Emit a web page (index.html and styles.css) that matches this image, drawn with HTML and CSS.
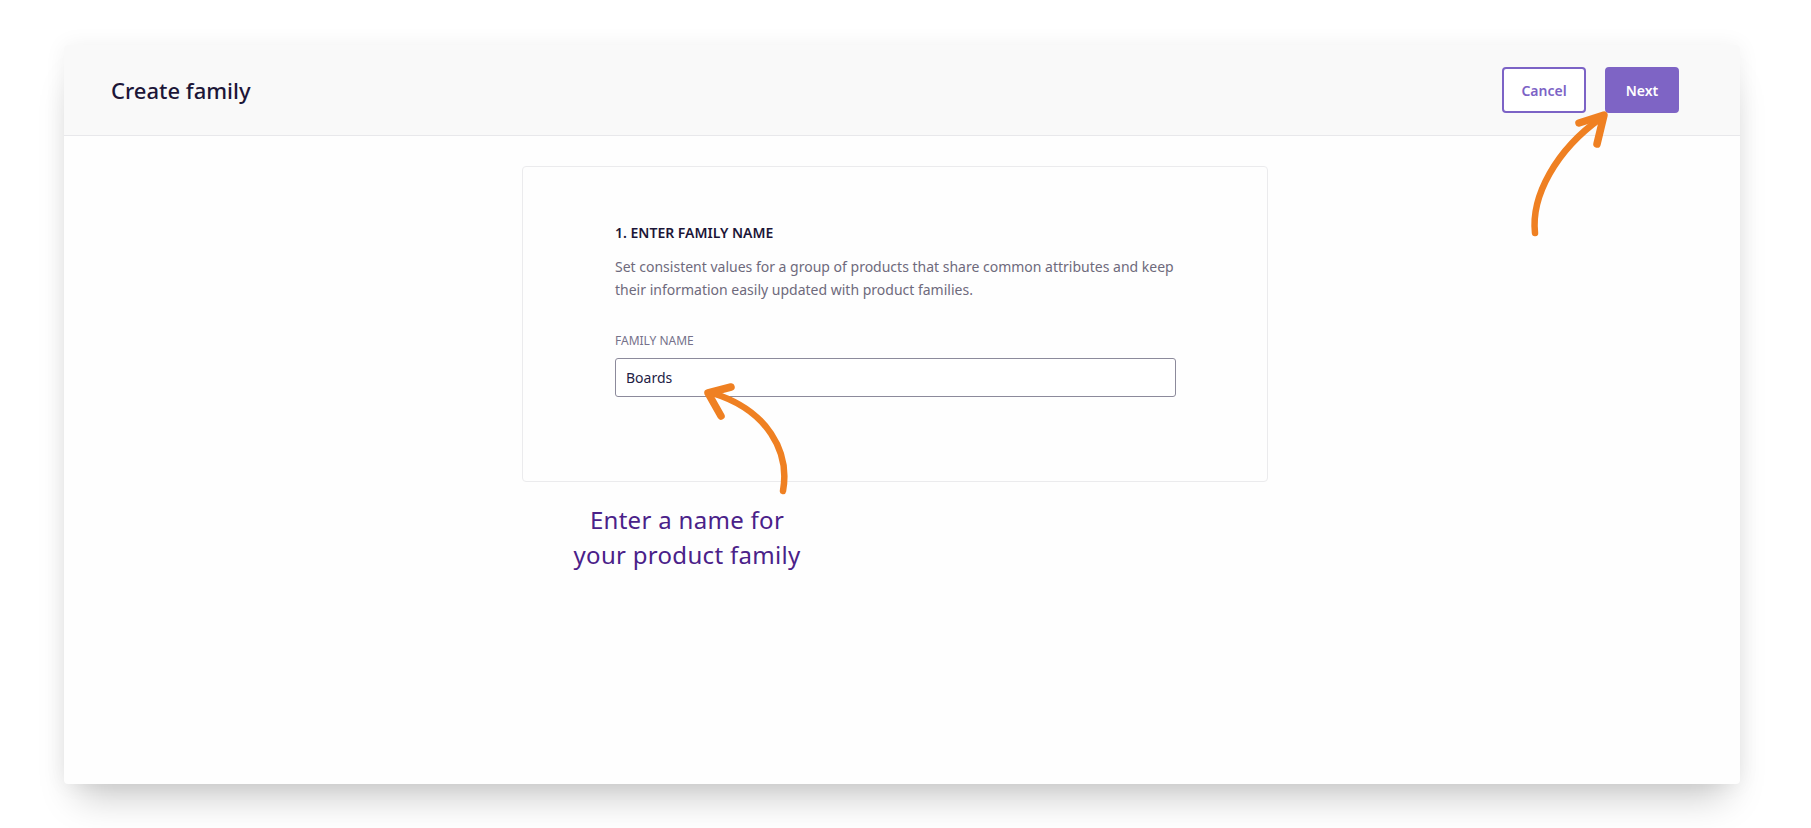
FILE: index.html
```html
<!DOCTYPE html>
<html lang="en">
<head>
<meta charset="utf-8">
<title>Create family</title>
<link rel="stylesheet" href="styles.css">
</head>
<body>
<div class="frame">
  <header class="header">
    <h1 class="title">Create family</h1>
    <div class="actions">
      <button class="btn btn-outline" type="button">Cancel</button>
      <button class="btn btn-primary" type="button">Next</button>
    </div>
  </header>
  <main class="content">
    <section class="card">
      <h2 class="step">1. ENTER FAMILY NAME</h2>
      <p class="desc">Set consistent values for a group of products that share common attributes and keep their information easily updated with product families.</p>
      <label class="label" for="fname">FAMILY NAME</label>
      <input class="field" id="fname" type="text" value="Boards" readonly>
    </section>
  </main>
</div>
<div class="note">Enter a name for<br>your product family</div>
<svg class="arrows" width="1811" height="828" viewBox="0 0 1811 828" aria-hidden="true">
  <g fill="none" stroke="#ef8022" stroke-linecap="round" stroke-linejoin="round">
    <path d="M1535 233 C1531 196 1556 150 1601 118" stroke-width="6.5"/>
    <path d="M1579 123 L1604 115 L1597 144" stroke-width="7.5"/>
    <path d="M783 491 C790 452 768 410 712 393" stroke-width="6.5"/>
    <path d="M731 387 L708 393 L721 416" stroke-width="7.5"/>
  </g>
</svg>
</body>
</html>
```

FILE: styles.css
```css
html, body {
  margin: 0;
  padding: 0;
}
body {
  position: relative;
  width: 1811px;
  height: 828px;
  overflow: hidden;
  background: #ffffff;
  font-family: "Noto Sans", "Open Sans", sans-serif;
  color: #1c1638;
}
.frame {
  margin: 45px 0 0 64px;
  width: 1676px;
  height: 739px;
  background: #fefefe;
  border-radius: 4px;
  overflow: hidden;
  box-shadow: 0 26px 36px -14px rgba(0, 0, 0, 0.22), 0 0 22px rgba(0, 0, 0, 0.06);
}
.header {
  box-sizing: border-box;
  height: 91px;
  display: flex;
  align-items: center;
  justify-content: space-between;
  padding: 0 61px 0 47px;
  background: #f9f9f9;
  border-bottom: 1px solid #e8e8eb;
}
.title {
  margin: 0;
  font-size: 22px;
  font-weight: 500;
  line-height: 30px;
  color: #1c1638;
}
.actions {
  display: flex;
  gap: 19px;
}
.btn {
  box-sizing: border-box;
  height: 46px;
  border-radius: 4px;
  border: 2px solid #7c63c6;
  font-family: "Noto Sans", sans-serif;
  font-size: 14px;
  font-weight: 600;
  cursor: pointer;
}
.btn-outline {
  width: 84px;
  background: #ffffff;
  color: #7c63c6;
}
.btn-primary {
  width: 74px;
  background: #7e64c5;
  border-color: #7e64c5;
  color: #ffffff;
}
.content {
  padding: 30px 0 0 458px;
}
.card {
  box-sizing: border-box;
  width: 746px;
  height: 316px;
  border: 1px solid #ebebed;
  border-radius: 4px;
  padding: 56px 92px 0 92px;
  display: flex;
  flex-direction: column;
  align-items: flex-start;
}
.step {
  margin: 0;
  font-size: 14px;
  line-height: 20px;
  font-weight: 600;
  color: #1c1638;
}
.desc {
  margin: 12px 0 0;
  font-size: 14px;
  line-height: 23px;
  color: #6e6a7c;
}
.label {
  margin-top: 32px;
  font-size: 12px;
  line-height: 16px;
  color: #75718a;
}
.field {
  box-sizing: border-box;
  margin-top: 9px;
  width: 561px;
  height: 39px;
  border: 1px solid #8c8a9b;
  border-radius: 3px;
  padding: 0 10px;
  font-family: "Noto Sans", sans-serif;
  font-size: 14px;
  color: #231d45;
  background: #ffffff;
  outline: none;
}
.note {
  position: absolute;
  left: 537px;
  top: 502px;
  width: 300px;
  text-align: center;
  font-family: "Noto Sans", sans-serif;
  font-size: 24px;
  line-height: 35px;
  letter-spacing: 0.3px;
  color: #4a2189;
}
.arrows {
  position: absolute;
  left: 0;
  top: 0;
  pointer-events: none;
}
```
